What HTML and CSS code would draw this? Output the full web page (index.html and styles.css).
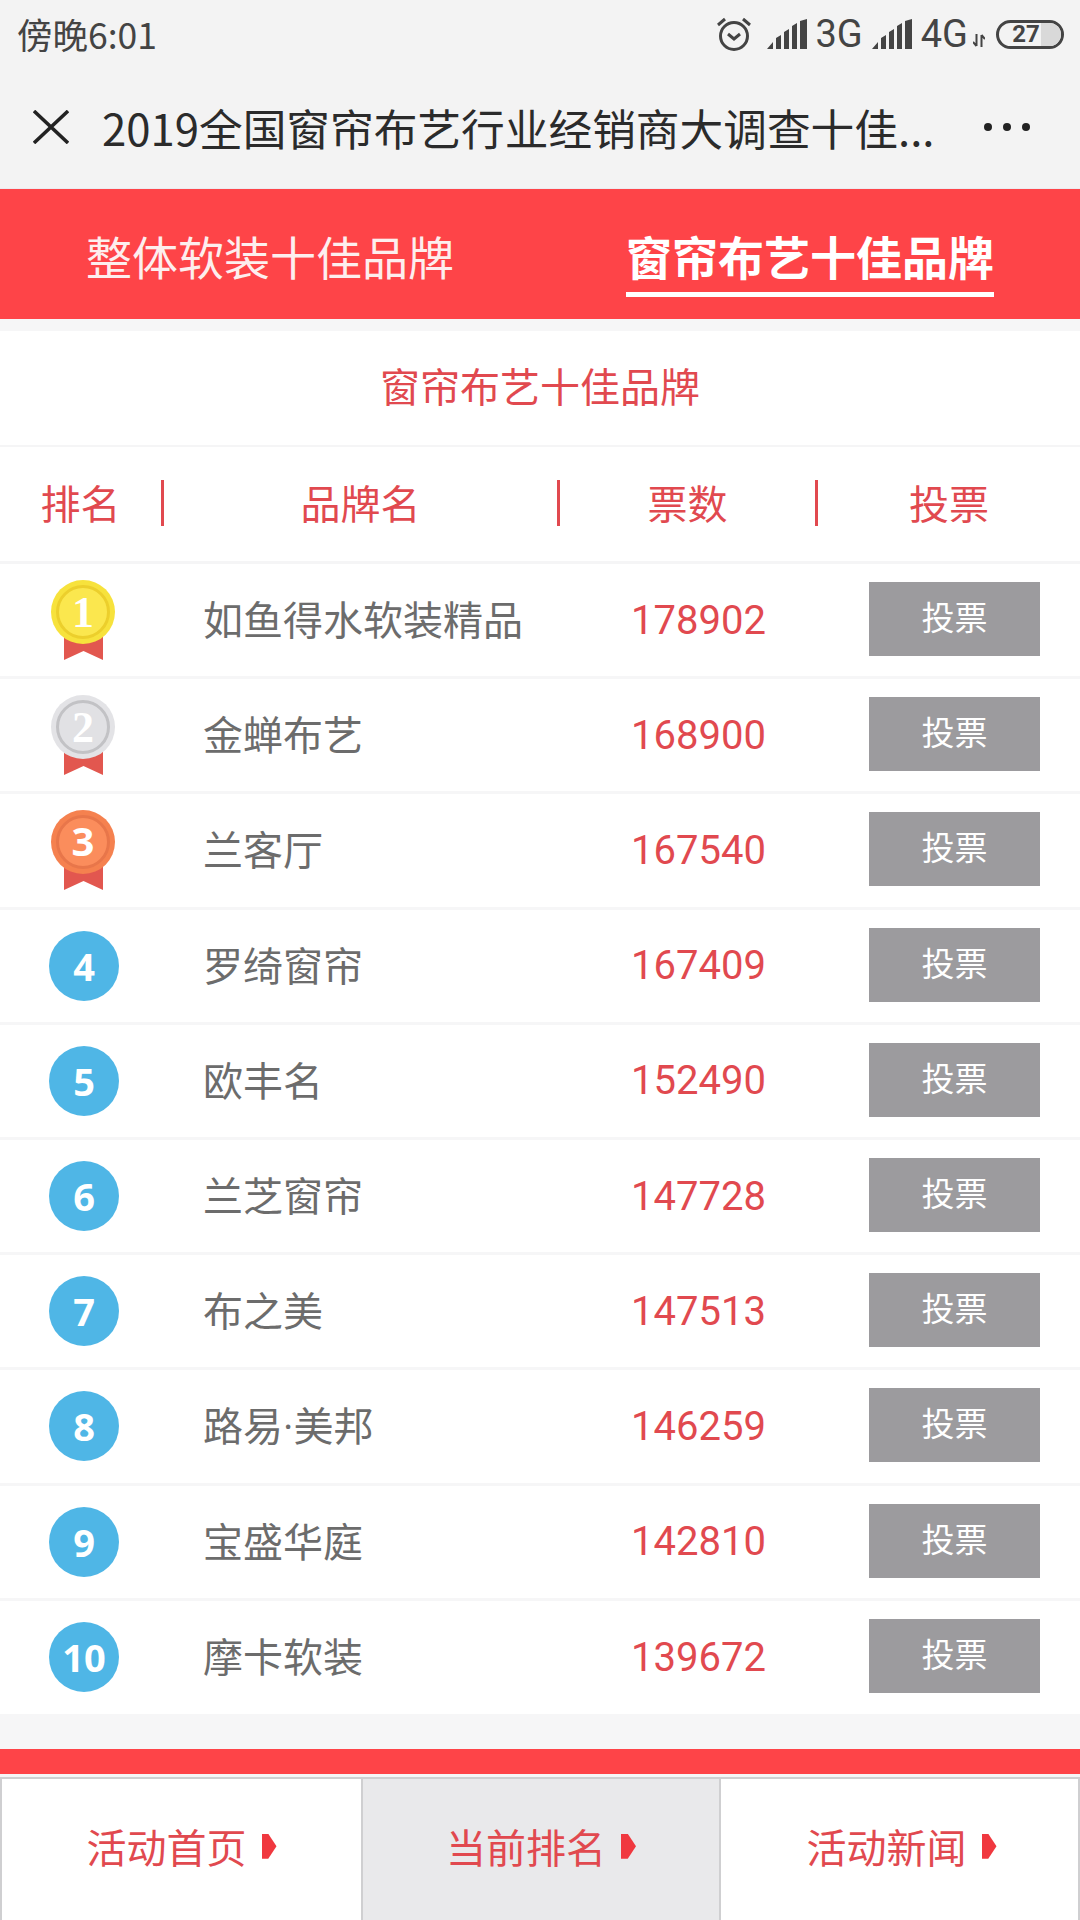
FILE: index.html
```html
<!DOCTYPE html>
<html lang="zh-CN">
<head>
    <meta charset="UTF-8">
    <meta name="viewport" content="width=device-width, initial-scale=1.0">
    <title>2019全国窗帘布艺行业经销商大调查十佳</title>
    <link rel="stylesheet" href="styles.css">
</head>
<body>
    <svg class="defs" width="0" height="0">
        <symbol id="signal" viewBox="0 0 40 30">
            <path d="M0 30 L6 23 V30 Z M9 19 L14 16 V30 H9 Z M17 13 L22 10 V30 H17 Z M25 7 L30 4 V30 H25 Z M33 2 L40 0 V30 H33 Z"/>
        </symbol>
    </svg>

    <header class="top">
        <div class="status">
            <span class="time">傍晚6:01</span>
            <div class="status-right">
                <svg class="alarm" viewBox="0 0 34 34" fill="none" stroke="#444" stroke-width="3">
                    <circle cx="17" cy="19" r="13.5"/>
                    <path d="M11 17 L17 22 L23 17"/>
                    <path d="M1 8 L8 2 M33 8 L26 2"/>
                </svg>
                <svg class="signal"><use href="#signal"/></svg>
                <span class="net">3G</span>
                <svg class="signal sig2"><use href="#signal"/></svg>
                <span class="net">4G</span>
                <svg class="updown" viewBox="0 0 12 13" fill="none" stroke="#444" stroke-width="2">
                    <path d="M3.5 0 V12 M0 8 L3.5 12 M8.5 13 V1 M12 5 L8.5 1"/>
                </svg>
                <div class="battery"><span class="battery-level"></span><span class="battery-num">27</span></div>
            </div>
        </div>
        <nav class="navbar">
            <svg class="close" viewBox="0 0 36 34" fill="none" stroke="#222" stroke-width="3.5">
                <path d="M1 1 L35 33 M35 1 L1 33"/>
            </svg>
            <h1 class="page-title">2019全国窗帘布艺行业经销商大调查十佳...</h1>
            <div class="dots"><i></i><i></i><i></i></div>
        </nav>
    </header>

    <div class="tabs">
        <a class="tab">整体软装十佳品牌</a>
        <a class="tab active">窗帘布艺十佳品牌</a>
    </div>

    <main class="board">
        <h2 class="board-title">窗帘布艺十佳品牌</h2>
        <div class="thead">
            <div class="th">排名</div>
            <div class="th">品牌名</div>
            <div class="th">票数</div>
            <div class="th">投票</div>
        </div>

        <div class="row">
            <div class="rank">
                <svg class="medal" viewBox="0 0 72 82">
                    <path d="M17 46 H56 V81 L36.5 72 L17 81 Z" fill="#e2574f"/>
                    <circle cx="36" cy="33" r="32" fill="#f7e23c"/>
                    <circle cx="36" cy="33" r="25.5" fill="#fbe74e" stroke="#eccf2c" stroke-width="3"/>
                    <text x="36" y="48" class="medal-num serif">1</text>
                </svg>
            </div>
            <div class="name">如鱼得水软装精品</div>
            <div class="votes">178902</div>
            <a class="vote-btn">投票</a>
        </div>
        <div class="row">
            <div class="rank">
                <svg class="medal" viewBox="0 0 72 82">
                    <path d="M17 46 H56 V81 L36.5 72 L17 81 Z" fill="#e2574f"/>
                    <circle cx="36" cy="33" r="32" fill="#e3e3e6"/>
                    <circle cx="36" cy="33" r="25.5" fill="#e1e1e4" stroke="#c2c2c5" stroke-width="3"/>
                    <text x="36" y="48" class="medal-num serif">2</text>
                </svg>
            </div>
            <div class="name">金蝉布艺</div>
            <div class="votes">168900</div>
            <a class="vote-btn">投票</a>
        </div>
        <div class="row">
            <div class="rank">
                <svg class="medal" viewBox="0 0 72 82">
                    <path d="M17 46 H56 V81 L36.5 72 L17 81 Z" fill="#e2574f"/>
                    <circle cx="36" cy="33" r="32" fill="#f5814f"/>
                    <circle cx="36" cy="33" r="25.5" fill="#fb8d5c" stroke="#e8764a" stroke-width="3"/>
                    <text x="36" y="47" class="medal-num">3</text>
                </svg>
            </div>
            <div class="name">兰客厅</div>
            <div class="votes">167540</div>
            <a class="vote-btn">投票</a>
        </div>
        <div class="row">
            <div class="rank"><span class="ball">4</span></div>
            <div class="name">罗绮窗帘</div>
            <div class="votes">167409</div>
            <a class="vote-btn">投票</a>
        </div>
        <div class="row">
            <div class="rank"><span class="ball">5</span></div>
            <div class="name">欧丰名</div>
            <div class="votes">152490</div>
            <a class="vote-btn">投票</a>
        </div>
        <div class="row">
            <div class="rank"><span class="ball">6</span></div>
            <div class="name">兰芝窗帘</div>
            <div class="votes">147728</div>
            <a class="vote-btn">投票</a>
        </div>
        <div class="row">
            <div class="rank"><span class="ball">7</span></div>
            <div class="name">布之美</div>
            <div class="votes">147513</div>
            <a class="vote-btn">投票</a>
        </div>
        <div class="row">
            <div class="rank"><span class="ball">8</span></div>
            <div class="name">路易·美邦</div>
            <div class="votes">146259</div>
            <a class="vote-btn">投票</a>
        </div>
        <div class="row">
            <div class="rank"><span class="ball">9</span></div>
            <div class="name">宝盛华庭</div>
            <div class="votes">142810</div>
            <a class="vote-btn">投票</a>
        </div>
        <div class="row">
            <div class="rank"><span class="ball">10</span></div>
            <div class="name">摩卡软装</div>
            <div class="votes">139672</div>
            <a class="vote-btn">投票</a>
        </div>
    </main>

    <div class="red-strip"></div>
    <footer class="bottom">
        <a class="bottom-item">活动首页<span class="arrow"></span></a>
        <a class="bottom-item current">当前排名<span class="arrow"></span></a>
        <a class="bottom-item">活动新闻<span class="arrow"></span></a>
    </footer>
</body>
</html>
```

FILE: styles.css
```css
*{
    margin: 0;
    padding: 0;
    box-sizing: border-box;
}
body{
    width: 1080px;
    height: 1920px;
    overflow: hidden;
    background-color: #f6f6f7;
    font-family: "Noto Sans CJK SC", "Noto Sans", sans-serif;
}
.defs{
    position: absolute;
}

/* status bar + wechat title */
.top{
    height: 189px;
    background-color: #f3f3f3;
    border-bottom: 1px solid #eceaf0;
}
.status{
    height: 68px;
    padding: 0 16px 0 17px;
    display: flex;
    justify-content: space-between;
    align-items: center;
}
.time{
    font-size: 35.5px;
    color: #444;
    line-height: 68px;
}
.status-right{
    display: flex;
    align-items: center;
    color: #444;
}
.alarm{
    width: 34px;
    height: 34px;
    margin-right: 16px;
}
.signal{
    width: 40px;
    height: 30px;
    fill: #444;
    margin-right: 9px;
}
.sig2{
    margin-left: 9px;
}
.net{
    font-family: Roboto, sans-serif;
    font-size: 38px;
    font-weight: 400;
    line-height: 40px;
}
.updown{
    width: 12px;
    height: 13px;
    margin: 12px 11px 0 5px;
}
.battery{
    width: 68px;
    height: 29px;
    border: 3px solid #444;
    border-radius: 15px;
    position: relative;
    display: flex;
    align-items: center;
    justify-content: center;
    overflow: hidden;
}
.battery-level{
    position: absolute;
    top: 0;
    right: 0;
    bottom: 0;
    width: 20px;
    background-color: #d9d9d9;
}
.battery-num{
    position: relative;
    font-family: Roboto, sans-serif;
    font-size: 24px;
    font-weight: 700;
    margin-right: 8px;
}
.navbar{
    height: 120px;
    padding: 0 50px 2px 33px;
    display: flex;
    align-items: center;
}
.close{
    width: 36px;
    height: 34px;
    flex: none;
}
.page-title{
    flex: 1;
    margin-left: 33px;
    font-size: 43.7px;
    font-weight: 400;
    color: #2b2b2b;
    white-space: nowrap;
}
.dots{
    display: flex;
    gap: 11px;
}
.dots i{
    width: 8px;
    height: 8px;
    border-radius: 50%;
    background-color: #222;
}

/* tabs */
.tabs{
    height: 130px;
    background-color: #fe4448;
    display: flex;
}
.tab{
    flex: 1;
    display: flex;
    justify-content: center;
    align-items: flex-start;
    padding-top: 35px;
    font-size: 46px;
    line-height: 62px;
    color: #fdeeee;
}
.tab.active{
    height: 108px;
    font-weight: 700;
    color: #fff;
    background: linear-gradient(#fff, #fff) center bottom / 368px 5px no-repeat;
}

/* table */
.board{
    margin-top: 12px;
    background-color: #fff;
    color: #e1494f;
}
.board-title{
    height: 116px;
    font-size: 40px;
    font-weight: 400;
    line-height: 108px;
    text-align: center;
    border-bottom: 2px solid #f5f5f6;
}
.thead{
    height: 117px;
    padding-bottom: 3px;
    display: grid;
    grid-template-columns: 164px 396px 258px 262px;
    align-items: center;
    border-bottom: 3px solid #f5f5f6;
}
.th{
    height: 46px;
    font-size: 40px;
    line-height: 44px;
    text-align: center;
    border-right: 3px solid #e1494f;
}
.th:last-child{
    border-right: 0;
}
.row{
    height: 115.2px;
    display: flex;
    align-items: center;
    border-bottom: 3px solid #f6f6f7;
}
.row:last-child{
    height: 113px;
    border-bottom: 0;
}
.rank{
    width: 203px;
    flex: none;
    display: flex;
    justify-content: flex-start;
    padding-left: 47px;
}
.medal{
    width: 72px;
    height: 82px;
}
.medal-num{
    font-family: "Open Sans", sans-serif;
    font-size: 40px;
    font-weight: 700;
    fill: #fff;
    text-anchor: middle;
}
.medal-num.serif{
    font-family: "Liberation Serif", serif;
    font-size: 44px;
}
.ball{
    width: 70px;
    height: 70px;
    margin-left: 2px;
    border-radius: 50%;
    background-color: #4fb6e6;
    color: #fff;
    font-family: "Open Sans", sans-serif;
    font-size: 38px;
    font-weight: 700;
    line-height: 70px;
    text-align: center;
}
.name{
    width: 428px;
    flex: none;
    font-family: Roboto, "Noto Sans CJK SC", sans-serif;
    font-size: 40px;
    color: #6c6c6c;
    padding-bottom: 4px;
}
.votes{
    width: 238px;
    flex: none;
    font-family: Roboto, sans-serif;
    font-size: 40px;
    color: #e1494f;
}
.vote-btn{
    width: 171px;
    height: 74px;
    flex: none;
    margin-top: -2px;
    background-color: #9c9b9e;
    color: #fff;
    font-size: 33px;
    line-height: 68px;
    text-align: center;
}

/* bottom nav */
.red-strip{
    margin-top: 35px;
    height: 25px;
    background-color: #fe4448;
}
.bottom{
    margin-top: 3px;
    height: 145px;
    display: grid;
    grid-template-columns: 361px 358px 361px;
    background-color: #fff;
    border: 2px solid #cfcfd1;
}
.bottom-item{
    display: flex;
    justify-content: center;
    align-items: center;
    gap: 15px;
    font-size: 40px;
    color: #e1494f;
    border-right: 2px solid #cfcfd1;
    padding-bottom: 6px;
}
.bottom-item:last-child{
    border-right: 0;
}
.current{
    background-color: #e9e9eb;
}
.arrow{
    width: 15px;
    height: 25px;
    background-color: #f0383f;
    clip-path: polygon(0 0, 45% 0, 100% 50%, 45% 100%, 0 100%);
}
```
